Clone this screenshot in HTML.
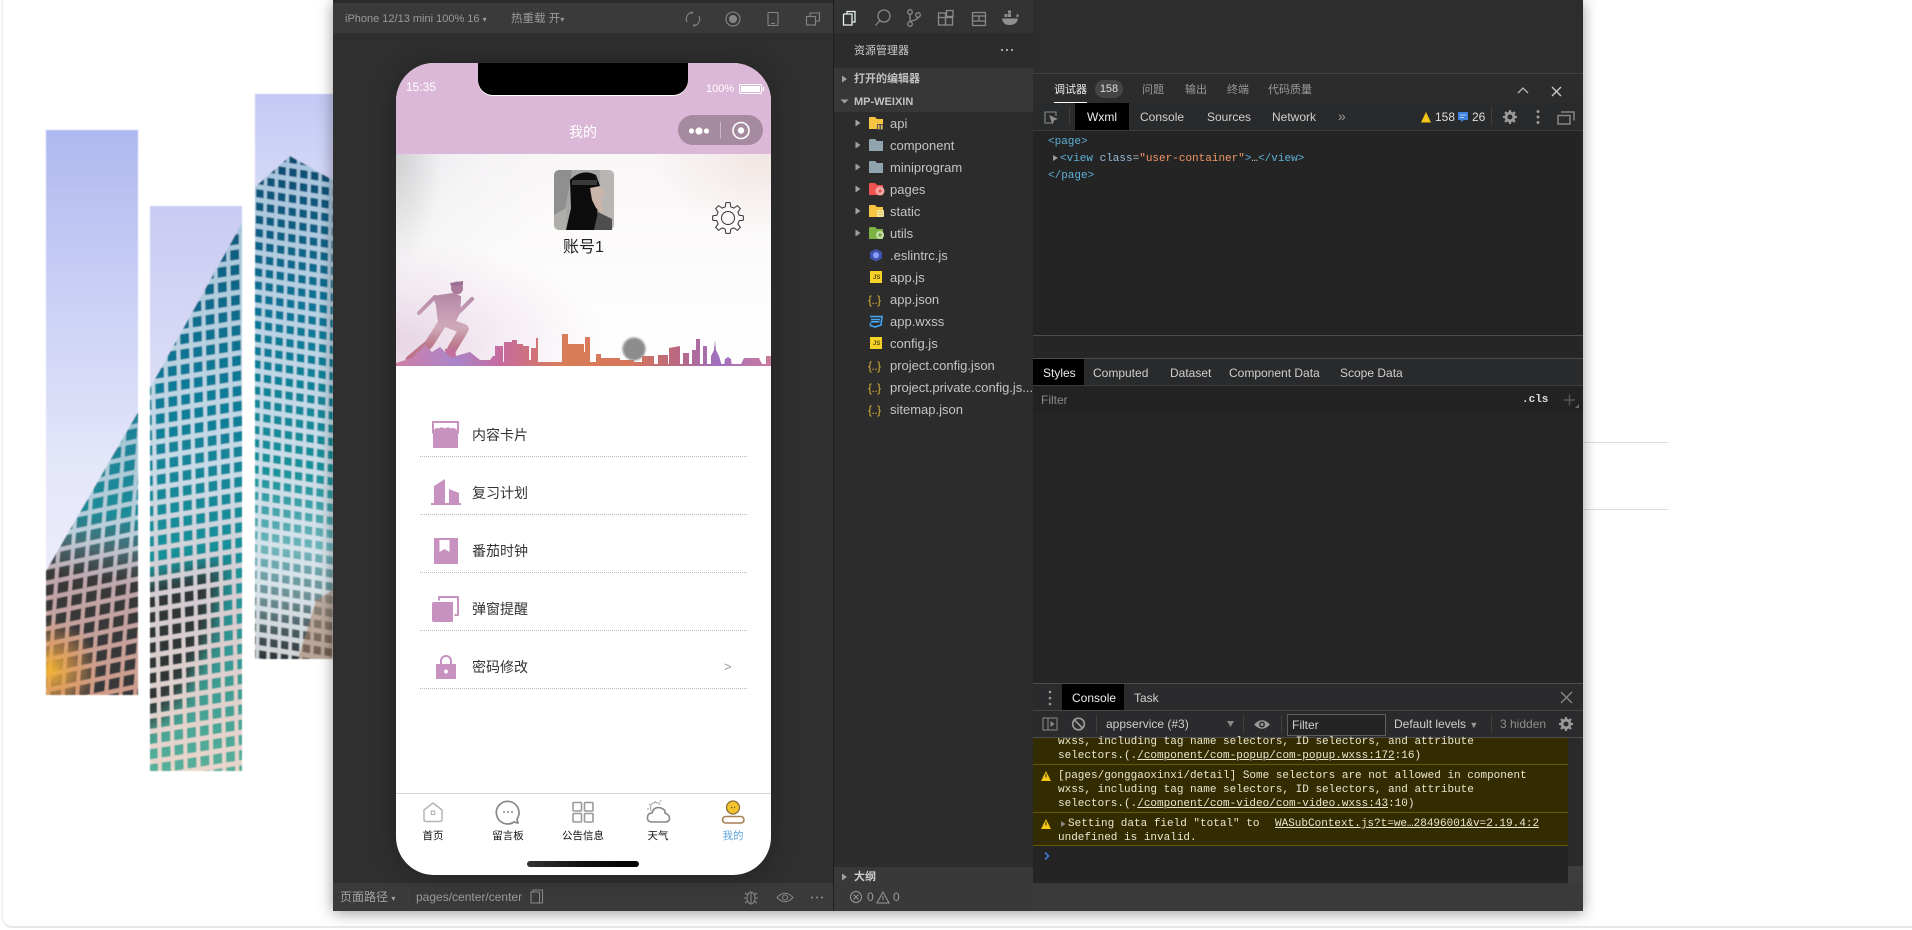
<!DOCTYPE html>
<html lang="zh"><head><meta charset="utf-8"><title>WeChat DevTools</title>
<style>
html,body{margin:0;padding:0;background:#fff;width:1912px;height:930px;overflow:hidden}
body{position:relative;font-family:"Liberation Sans","Noto Sans CJK SC",sans-serif;color:#bbb}
.a{position:absolute}
.t{position:absolute;white-space:nowrap;line-height:16px;font-size:12px}
.m{font-family:"Liberation Mono","Noto Sans CJK SC",monospace;font-size:11px;line-height:14px}
.d{position:absolute;background:#3f3f3f}
.f{font-size:13px;color:#c4c4c4}
.c{color:#e9e5cf}
.c u{color:#e9e5cf}
</style></head><body>
<div class="a" style="left:1px;top:-12px;width:1925px;height:940px;border:2px solid #f2f2f2;border-bottom-color:#e8e8e8;border-radius:11px;box-sizing:border-box"></div>
<div class="a" style="left:1583px;top:442px;width:85px;height:1px;background:#ddd"></div>
<div class="a" style="left:1583px;top:509px;width:85px;height:1px;background:#ddd"></div>

<!-- building -->
<svg class="a" style="left:0;top:0" width="340" height="800" viewBox="0 0 340 800">
<defs>
<linearGradient id="s1" x1="0" y1="0" x2="0" y2="1"><stop offset="0" stop-color="#aeb9ef"/><stop offset=".3" stop-color="#cbd0f5"/><stop offset=".6" stop-color="#e5e7fa"/><stop offset="1" stop-color="#f0f1fb"/></linearGradient>
<linearGradient id="s2" x1="0" y1="0" x2="0" y2="1"><stop offset="0" stop-color="#c9cbf2"/><stop offset=".5" stop-color="#e6e8fa"/><stop offset="1" stop-color="#eceefb"/></linearGradient>
<linearGradient id="s3" x1="0" y1="0" x2="0" y2="1"><stop offset="0" stop-color="#c3c9f3"/><stop offset=".2" stop-color="#d8dcf8"/><stop offset="1" stop-color="#dde0f9"/></linearGradient>
<linearGradient id="fr1" gradientUnits="userSpaceOnUse" x1="105" y1="400" x2="75" y2="695"><stop offset="0" stop-color="#9cc4d4"/><stop offset=".45" stop-color="#bcd0dc"/><stop offset=".62" stop-color="#bfa6ac"/><stop offset="1" stop-color="#d09c88"/></linearGradient>
<linearGradient id="fr2" gradientUnits="userSpaceOnUse" x1="0" y1="223" x2="0" y2="771"><stop offset="0" stop-color="#a6c6da"/><stop offset=".45" stop-color="#c8dce8"/><stop offset=".7" stop-color="#d6ccd0"/><stop offset="1" stop-color="#e8d6cc"/></linearGradient>
<linearGradient id="fr3" gradientUnits="userSpaceOnUse" x1="0" y1="156" x2="0" y2="659"><stop offset="0" stop-color="#a6c4dc"/><stop offset=".5" stop-color="#c4dae8"/><stop offset=".85" stop-color="#d8e4ea"/><stop offset="1" stop-color="#cfd2d4"/></linearGradient>
<linearGradient id="w1" gradientUnits="userSpaceOnUse" x1="105" y1="400" x2="75" y2="695"><stop offset="0" stop-color="#1f7e98"/><stop offset=".38" stop-color="#1c8c98"/><stop offset=".5" stop-color="#4b6a72"/><stop offset=".6" stop-color="#3a3838"/><stop offset="1" stop-color="#37383c"/></linearGradient>
<linearGradient id="w2" gradientUnits="userSpaceOnUse" x1="0" y1="223" x2="0" y2="771"><stop offset="0" stop-color="#125a7c"/><stop offset=".3" stop-color="#0f7b98"/><stop offset=".6" stop-color="#18919a"/><stop offset=".85" stop-color="#3e9c92"/><stop offset="1" stop-color="#57b09a"/></linearGradient>
<linearGradient id="w3" gradientUnits="userSpaceOnUse" x1="0" y1="156" x2="0" y2="659"><stop offset="0" stop-color="#114a70"/><stop offset=".3" stop-color="#0f7596"/><stop offset=".62" stop-color="#149199"/><stop offset=".78" stop-color="#6fb4bb"/><stop offset=".88" stop-color="#6d8f94"/><stop offset="1" stop-color="#2c3236"/></linearGradient>
<radialGradient id="yel" gradientUnits="userSpaceOnUse" cx="50" cy="670" r="50"><stop offset="0" stop-color="#f0b232"/><stop offset=".55" stop-color="#e49c50" stop-opacity=".55"/><stop offset="1" stop-color="#e09a55" stop-opacity="0"/></radialGradient>
<pattern id="g1" width="15" height="15" patternUnits="userSpaceOnUse" patternTransform="translate(40 400) rotate(-12) skewX(-16)"><rect x="2" y="2.500" width="11" height="10.500" fill="#fff"/></pattern>
<pattern id="g2" width="13" height="15" patternUnits="userSpaceOnUse" patternTransform="translate(150 200) rotate(-9) skewX(-8)"><rect x="2" y="2.500" width="9" height="10" fill="#fff"/></pattern>
<pattern id="g3" width="11" height="13" patternUnits="userSpaceOnUse" patternTransform="translate(255 160) rotate(9) skewX(8)"><rect x="1.800" y="2.500" width="7.500" height="8" fill="#fff"/></pattern>
<mask id="m1"><rect width="340" height="800" fill="url(#g1)"/></mask>
<mask id="m2"><rect width="340" height="800" fill="url(#g2)"/></mask>
<mask id="m3"><rect width="340" height="800" fill="url(#g3)"/></mask>
<clipPath id="b"><polygon points="46,571 138,412 150,388 242,223 255,205 255,187 290,156 340,184 340,800 0,800 0,650"/></clipPath>
<clipPath id="c1"><rect x="46" y="130" width="92" height="565"/></clipPath>
<clipPath id="c2"><rect x="150" y="206" width="92" height="565"/></clipPath>
<clipPath id="c3"><rect x="255" y="94" width="78" height="565"/></clipPath>
<filter id="sb"><feGaussianBlur stdDeviation=".6"/></filter>
<filter id="bb" x="-30%" y="-30%" width="160%" height="160%"><feGaussianBlur stdDeviation="9"/></filter>
</defs>
<g filter="url(#sb)">
<g clip-path="url(#c1)"><rect x="46" y="130" width="92" height="565" fill="url(#s1)"/>
<g clip-path="url(#b)"><rect width="340" height="800" fill="url(#fr1)"/><rect width="340" height="800" fill="url(#w1)" mask="url(#m1)"/><rect x="46" y="600" width="92" height="95" fill="url(#yel)"/></g></g>
<g clip-path="url(#c2)"><rect x="150" y="206" width="92" height="565" fill="url(#s2)"/>
<g clip-path="url(#b)"><rect width="340" height="800" fill="url(#fr2)"/><rect width="340" height="800" fill="url(#w2)" mask="url(#m2)"/>
<g mask="url(#m2)"><polygon points="130,585 222,565 210,640 180,700 130,740" fill="#333436" filter="url(#bb)"/></g></g></g>
<g clip-path="url(#c3)"><rect x="255" y="94" width="78" height="565" fill="url(#s3)"/>
<g clip-path="url(#b)"><rect width="340" height="800" fill="url(#fr3)"/><rect width="340" height="800" fill="url(#w3)" mask="url(#m3)"/><polygon points="298,659 333,659 333,590 316,600" fill="#a87f66" opacity=".55"/></g></g>
</g>
</svg>

<!-- dark app -->
<div class="a" style="left:333px;top:0;width:1250px;height:911px;background:#2f2f2f;box-shadow:0 2px 14px rgba(0,0,0,.4)"></div>
<div class="a" style="left:333px;top:0;width:501px;height:3px;background:#2a2a2a"></div>
<div class="a" style="left:333px;top:3px;width:501px;height:30px;background:#3a3a3a"></div>
<div class="a" style="left:333px;top:883px;width:501px;height:28px;background:#3a3a3a"></div>
<div class="a" style="left:833px;top:0;width:1px;height:911px;background:#1e1e1e"></div>
<!-- sidebar -->
<div class="a" style="left:834px;top:0;width:199px;height:883px;background:#2c2c2c"></div>
<div class="a" style="left:834px;top:0;width:199px;height:33px;background:#333"></div>
<div class="a" style="left:834px;top:68px;width:199px;height:44px;background:#373737"></div>
<div class="a" style="left:834px;top:867px;width:199px;height:44px;background:#393939"></div>
<!-- devtools -->
<div class="a" style="left:1033px;top:0;width:550px;height:73px;background:#2d2d2d"></div>
<div class="a" style="left:1033px;top:73px;width:550px;height:1px;background:#414141"></div>
<div class="a" style="left:1033px;top:74px;width:550px;height:29px;background:#2c2c2c"></div>
<div class="a" style="left:1033px;top:103px;width:550px;height:27px;background:#292a2c"></div>
<div class="a" style="left:1033px;top:130px;width:550px;height:205px;background:#242424;border-top:1px solid #3c3c3c;box-sizing:border-box"></div>
<div class="a" style="left:1033px;top:335px;width:550px;height:1px;background:#4d4d4d"></div>
<div class="a" style="left:1033px;top:336px;width:550px;height:22px;background:#262626"></div>
<div class="a" style="left:1033px;top:358px;width:550px;height:1px;background:#4d4d4d"></div>
<div class="a" style="left:1033px;top:359px;width:550px;height:26px;background:#292a2c"></div>
<div class="a" style="left:1033px;top:359px;width:51px;height:26px;background:#000"></div>
<div class="a" style="left:1033px;top:385px;width:550px;height:1px;background:#3c3c3c"></div>
<div class="a" style="left:1033px;top:386px;width:550px;height:27px;background:#222"></div>
<div class="a" style="left:1033px;top:413px;width:550px;height:270px;background:#252525"></div>
<div class="a" style="left:1033px;top:683px;width:550px;height:1px;background:#4d4d4d"></div>
<div class="a" style="left:1033px;top:684px;width:550px;height:26px;background:#2b2b2d"></div>
<div class="a" style="left:1062px;top:684px;width:62px;height:26px;background:#000"></div>
<div class="a" style="left:1033px;top:710px;width:550px;height:1px;background:#444"></div>
<div class="a" style="left:1033px;top:711px;width:550px;height:26px;background:#2b2b2d"></div>
<div class="a" style="left:1033px;top:737px;width:550px;height:1px;background:#4d4d4d"></div>
<div class="a" style="left:1033px;top:738px;width:550px;height:145px;background:#242424"></div>
<div class="a" style="left:1033px;top:738px;width:535px;height:107px;background:#332c00"></div>
<div class="a" style="left:1033px;top:764px;width:535px;height:1px;background:#665a00"></div>
<div class="a" style="left:1033px;top:812px;width:535px;height:1px;background:#665a00"></div>
<div class="a" style="left:1033px;top:845px;width:535px;height:1px;background:#665a00"></div>
<div class="a" style="left:1568px;top:738px;width:15px;height:145px;background:#2a2a2a"></div>
<div class="a" style="left:1568px;top:866px;width:15px;height:17px;background:#3d3d3d"></div>
<div class="a" style="left:1033px;top:883px;width:550px;height:28px;background:#3a3a3a"></div>
<div class="a" style="left:1033px;top:866px;width:535px;height:17px;background:#242424"></div>

<!-- phone -->
<div class="a" style="left:396px;top:63px;width:375px;height:812px;border-radius:38px;overflow:hidden;background:#fff;box-shadow:0 0 26px rgba(0,0,0,.28)">
  <div class="a" style="left:0;top:0;width:375px;height:91px;background:#dcb8d8"></div>
  <div class="a" style="left:82px;top:0;width:210px;height:32px;background:#000;border-radius:0 0 15px 15px;box-shadow:0 1px 0 #fff"></div>
  <div class="a" style="left:0;top:91px;width:375px;height:212px;background:
    radial-gradient(ellipse 210px 105px at 0 190px,rgba(222,196,218,.7) 0,rgba(230,210,226,.4) 50%,rgba(255,255,255,0) 100%),
    radial-gradient(ellipse 45px 110px at 0 0,rgba(175,175,175,.45),rgba(255,255,255,0)),
    radial-gradient(ellipse 120px 80px at 375px 0,rgba(232,212,205,.5),rgba(255,255,255,0)),
    linear-gradient(125deg,rgba(225,225,230,.6) 0,rgba(240,240,242,.4) 18%,rgba(255,255,255,0) 36%),
    linear-gradient(180deg,#f9f6f7,#fdfcfc 60%,#fff)"></div>
  <div class="a" style="left:158px;top:107px;width:60px;height:60px;border-radius:6px;background:#a9a9a9;overflow:hidden"></div>
  <div class="a" style="left:0;top:730px;width:375px;height:1px;background:#d6d6d6"></div>
  <div class="a" style="left:131px;top:798px;width:112px;height:6px;border-radius:3px;background:linear-gradient(90deg,#333,#111 50%,#000)"></div>
</div>
<div class="t" style="left:406px;top:79px;color:#fff;font-size:12px">15:35</div>
<div class="t" style="left:706px;top:81px;color:#fff;font-size:11px">100%</div>
<div class="t" style="left:569px;top:124px;color:#fff;font-size:14px">我的</div>
<div class="t" style="left:563px;top:240px;width:40px;text-align:center;color:#222;font-size:16px">账号1</div>
<div class="a" style="left:678px;top:115px;width:85px;height:30px;border-radius:15px;background:#a68a9f;"></div>

<div class="t" style="left:472px;top:427px;color:#333;font-size:14px">内容卡片</div>
<div class="t" style="left:472px;top:485px;color:#333;font-size:14px">复习计划</div>
<div class="t" style="left:472px;top:543px;color:#333;font-size:14px">番茄时钟</div>
<div class="t" style="left:472px;top:601px;color:#333;font-size:14px">弹窗提醒</div>
<div class="t" style="left:472px;top:659px;color:#333;font-size:14px">密码修改</div>
<div class="t" style="left:724px;top:659px;color:#999;font-size:13px">&gt;</div>
<div class="a" style="left:420px;top:456px;width:327px;border-top:1px dotted #bbb"></div>
<div class="a" style="left:420px;top:514px;width:327px;border-top:1px dotted #bbb"></div>
<div class="a" style="left:420px;top:572px;width:327px;border-top:1px dotted #bbb"></div>
<div class="a" style="left:420px;top:630px;width:327px;border-top:1px dotted #bbb"></div>
<div class="a" style="left:420px;top:688px;width:327px;border-top:1px dotted #bbb"></div>

<div class="t" style="left:413px;top:828px;width:40px;text-align:center;color:#111;font-size:10.5px">首页</div>
<div class="t" style="left:478px;top:828px;width:60px;text-align:center;color:#111;font-size:10.5px">留言板</div>
<div class="t" style="left:553px;top:828px;width:60px;text-align:center;color:#111;font-size:10.5px">公告信息</div>
<div class="t" style="left:638px;top:828px;width:40px;text-align:center;color:#111;font-size:10.5px">天气</div>
<div class="t" style="left:713px;top:828px;width:40px;text-align:center;color:#5ea3d8;font-size:10.5px">我的</div>

<!-- preview toolbar text -->
<div class="t" style="left:345px;top:11px;color:#9a9a9a;font-size:11px">iPhone 12/13 mini 100% 16 <span style="font-size:8px">▾</span></div>
<div class="t" style="left:511px;top:11px;color:#9a9a9a;font-size:11.5px">热重载 开<span style="font-size:8px">▾</span></div>
<!-- bottom bar -->
<div class="t" style="left:340px;top:889px;color:#a4a4a4;font-size:12px">页面路径 <span style="font-size:8px">▾</span></div>
<div class="t" style="left:416px;top:889px;color:#9a9a9a;font-size:12px">pages/center/center</div>

<!-- sidebar text -->
<div class="t" style="left:854px;top:43px;color:#ccc;font-size:11px">资源管理器</div>
<div class="t" style="left:854px;top:71px;color:#c2c2c2;font-size:11px;font-weight:700">打开的编辑器</div>
<div class="t" style="left:854px;top:94px;color:#c2c2c2;font-size:11px;font-weight:700">MP-WEIXIN</div>
<div class="t f" style="left:890px;top:116px">api</div>
<div class="t f" style="left:890px;top:138px">component</div>
<div class="t f" style="left:890px;top:160px">miniprogram</div>
<div class="t f" style="left:890px;top:182px">pages</div>
<div class="t f" style="left:890px;top:204px">static</div>
<div class="t f" style="left:890px;top:226px">utils</div>
<div class="t f" style="left:890px;top:248px">.eslintrc.js</div>
<div class="t f" style="left:890px;top:270px">app.js</div>
<div class="t f" style="left:890px;top:292px">app.json</div>
<div class="t f" style="left:890px;top:314px">app.wxss</div>
<div class="t f" style="left:890px;top:336px">config.js</div>
<div class="t f" style="left:890px;top:358px">project.config.json</div>
<div class="t f" style="left:890px;top:380px;letter-spacing:-.03px">project.private.config.js...</div>
<div class="t f" style="left:890px;top:402px">sitemap.json</div>
<div class="t" style="left:854px;top:869px;color:#ccc;font-size:11px;font-weight:700">大纲</div>
<div class="t" style="left:867px;top:889px;color:#999;font-size:12px">0</div>
<div class="t" style="left:893px;top:889px;color:#999;font-size:12px">0</div>
<div class="t" style="left:1054px;top:82px;color:#eee;font-size:11px">调试器</div>
<div class="a" style="left:1054px;top:102px;width:33px;height:1px;background:#fff"></div>
<div class="a" style="left:1095px;top:80px;width:28px;height:18px;border-radius:9px;background:#454545"></div>
<div class="t" style="left:1095px;top:81px;width:28px;text-align:center;color:#ddd;font-size:11px">158</div>
<div class="t" style="left:1142px;top:82px;color:#9a9a9a;font-size:11px">问题</div>
<div class="t" style="left:1185px;top:82px;color:#9a9a9a;font-size:11px">输出</div>
<div class="t" style="left:1227px;top:82px;color:#9a9a9a;font-size:11px">终端</div>
<div class="t" style="left:1268px;top:82px;color:#9a9a9a;font-size:11px">代码质量</div>

<div class="a" style="left:1075px;top:103px;width:54px;height:27px;background:#000"></div>
<div class="t" style="left:1087px;top:109px;color:#eee">Wxml</div>
<div class="t" style="left:1140px;top:109px;color:#cfcfcf">Console</div>
<div class="t" style="left:1207px;top:109px;color:#cfcfcf">Sources</div>
<div class="t" style="left:1272px;top:109px;color:#cfcfcf">Network</div>
<div class="t" style="left:1338px;top:108px;color:#999;font-size:14px">»</div>
<div class="t" style="left:1435px;top:109px;color:#ddd">158</div>
<div class="t" style="left:1472px;top:109px;color:#ddd">26</div>

<div class="t m" style="left:1048px;top:135px;color:#5db0d7">&lt;page&gt;</div>
<div class="t m" style="left:1060px;top:152px;color:#5db0d7">&lt;view <span style="color:#9bbbdc">class</span><span style="color:#bbb">=</span><span style="color:#f29766">"user-container"</span>&gt;<span style="color:#ccc">…</span>&lt;/view&gt;</div>
<div class="t m" style="left:1048px;top:169px;color:#5db0d7">&lt;/page&gt;</div>

<div class="t" style="left:1043px;top:365px;color:#eee">Styles</div>
<div class="t" style="left:1093px;top:365px;color:#cfcfcf">Computed</div>
<div class="t" style="left:1170px;top:365px;color:#cfcfcf">Dataset</div>
<div class="t" style="left:1229px;top:365px;color:#cfcfcf">Component Data</div>
<div class="t" style="left:1340px;top:365px;color:#cfcfcf">Scope Data</div>
<div class="t" style="left:1041px;top:392px;color:#8a8a8a">Filter</div>
<div class="t m" style="left:1522px;top:392px;color:#ddd;font-weight:700;line-height:16px">.cls</div>

<div class="t" style="left:1072px;top:690px;color:#eee">Console</div>
<div class="t" style="left:1134px;top:690px;color:#cfcfcf">Task</div>
<div class="t" style="left:1106px;top:716px;color:#cfcfcf">appservice (#3)</div>
<div class="a" style="left:1287px;top:714px;width:99px;height:22px;border:1px solid #5e5e5e;box-sizing:border-box;background:#242424"></div>
<div class="t" style="left:1292px;top:717px;color:#cfcfcf">Filter</div>
<div class="t" style="left:1394px;top:716px;color:#cfcfcf">Default levels <span style="font-size:9px;color:#999">▼</span></div>
<div class="t" style="left:1500px;top:716px;color:#8d8d8d">3 hidden</div>

<div class="t m c" style="left:1058px;top:735px">wxss, including tag name selectors, ID selectors, and attribute</div>
<div class="t m c" style="left:1058px;top:749px">selectors.(.<u>/component/com-popup/com-popup.wxss:172</u>:16)</div>
<div class="t m c" style="left:1058px;top:769px">[pages/gonggaoxinxi/detail] Some selectors are not allowed in component</div>
<div class="t m c" style="left:1058px;top:783px">wxss, including tag name selectors, ID selectors, and attribute</div>
<div class="t m c" style="left:1058px;top:797px">selectors.(.<u>/component/com-video/com-video.wxss:43</u>:10)</div>
<div class="t m c" style="left:1068px;top:817px">Setting data field "total" to</div>
<div class="t m c" style="left:1275px;top:817px"><u>WASubContext.js?t=we…28496001&amp;v=2.19.4:2</u></div>
<div class="t m c" style="left:1058px;top:831px">undefined is invalid.</div>

<!-- dividers -->
<div class="d" style="left:408px;top:889px;width:1px;height:16px"></div>
<div class="d" style="left:1069px;top:107px;width:1px;height:18px"></div>
<div class="d" style="left:1491px;top:107px;width:1px;height:18px"></div>
<div class="d" style="left:1096px;top:715px;width:1px;height:18px"></div>
<div class="d" style="left:1243px;top:715px;width:1px;height:18px"></div>
<div class="d" style="left:1281px;top:715px;width:1px;height:18px"></div>
<div class="d" style="left:1491px;top:715px;width:1px;height:18px"></div>

<!-- icon overlay -->
<svg class="a" style="left:0;top:0" width="1912" height="930" viewBox="0 0 1912 930" fill="none">
<defs>
<polygon id="gear" points="11.16,-2.78 15.35,-2.16 15.35,2.16 11.16,2.78 9.86,5.92 12.38,9.33 9.33,12.38 5.92,9.86 2.78,11.16 2.16,15.35 -2.16,15.35 -2.78,11.16 -5.92,9.86 -9.33,12.38 -12.38,9.33 -9.86,5.92 -11.16,2.78 -15.35,2.16 -15.35,-2.16 -11.16,-2.78 -9.86,-5.92 -12.38,-9.33 -9.33,-12.38 -5.92,-9.86 -2.78,-11.16 -2.16,-15.35 2.16,-15.35 2.78,-11.16 5.92,-9.86 9.33,-12.38 12.38,-9.33 9.86,-5.92"/>
<linearGradient id="sky" gradientUnits="userSpaceOnUse" x1="396" y1="0" x2="771" y2="0">
<stop offset="0" stop-color="#cf7fa6"/><stop offset=".16" stop-color="#a985c9"/><stop offset=".28" stop-color="#c76a9e"/><stop offset=".45" stop-color="#d87d58"/><stop offset=".62" stop-color="#d8755a"/><stop offset=".75" stop-color="#b96880"/><stop offset=".86" stop-color="#a070c0"/><stop offset="1" stop-color="#cb7a9c"/></linearGradient>
<linearGradient id="run" gradientUnits="userSpaceOnUse" x1="0" y1="282" x2="0" y2="365"><stop offset="0" stop-color="#a97a9a"/><stop offset=".35" stop-color="#c39ab2"/><stop offset=".55" stop-color="#cfa9b8"/><stop offset=".75" stop-color="#bd7c8e"/><stop offset="1" stop-color="#c06a80"/></linearGradient>
<filter id="bl"><feGaussianBlur stdDeviation="1"/></filter>
</defs>
<!-- avatar -->
<g>
<rect x="554" y="170" width="60" height="60" rx="6" fill="#a6a6a6"/>
<path d="M554 176 Q554 170 560 170 H572 L566 205 L560 230 H560 Q554 230 554 224Z" fill="#8f8f8f"/>
<path d="M600 170 H608 Q614 170 614 176 V224 Q614 230 608 230 H600Z" fill="#b8b5b2"/>
<path d="M570 180 Q582 168 596 175 L600 186 L597 198 L598 230 H566 L571 208 Z" fill="#0d0d0d"/>
<rect x="572" y="180" width="25" height="5" fill="#3a3a3a"/>
<path d="M590 188 L600 186 L605 192 L601 200 L604 215 L596 208 L592 200Z" fill="#cbb5aa"/>
<path d="M598 212 L612 219 L612 230 H594Z" fill="#4e4e4e"/>
<path d="M554 215 L566 208 L566 230 H560 Q554 230 554 224Z" fill="#b0aeab"/>
</g>
<!-- gear big -->
<g transform="translate(728,218)"><use href="#gear" stroke="#333" stroke-width="1" stroke-linejoin="round" fill="#fdf9f8"/><circle r="6.5" stroke="#333" stroke-width="1"/></g>
<!-- status -->
<rect x="739.5" y="84.5" width="22" height="9" rx="1.5" stroke="#fff" stroke-width="1"/><rect x="741" y="86" width="19" height="6" fill="#fff"/><rect x="762.5" y="87" width="1.5" height="4" fill="#fff"/>
<!-- capsule -->
<circle cx="691.5" cy="131" r="2.6" fill="#fff"/><circle cx="699" cy="131" r="3.6" fill="#fff"/><circle cx="706.500" cy="131" r="2.6" fill="#fff"/>
<rect x="720" y="122" width="1" height="17" fill="#c9b8c5"/>
<circle cx="741" cy="130.5" r="8" stroke="#fff" stroke-width="1.6"/><circle cx="741" cy="130.5" r="3.2" fill="#fff"/>
<!-- runner -->
<ellipse cx="457" cy="288" rx="6" ry="6.500" fill="#a97a9a"/>
<path d="M450 283 L463 281 L463 285 L451 286Z" fill="#9c7092"/>
<path d="M452 293 L461 296 L461 300 L460 313 L454 325 L438 323 L436 306 L433 296Z" fill="url(#run)"/>
<g stroke="url(#run)" stroke-linecap="round" stroke-linejoin="round" fill="none">
<path d="M435 297 L426 306 L419 313" stroke-width="4"/>
<path d="M458 298 L459 312 L472 299" stroke-width="4"/>
<path d="M445 322 L464 329 L452 349" stroke-width="9.500"/>
<path d="M441 325 L429 344 L410 360" stroke-width="9"/>
</g>
<path d="M445 349 L455 347 L456 356 L470 352 L476 360 L452 366 L446 360Z" fill="#c0709a"/>
<!-- skyline -->
<path fill="url(#sky)" d="M396 366 V363 L412 358 L425 345 L432 352 L440 347 L448 355 L452 358 L470 352 L480 360 H490 L493 356 H497 V366Z
M495 366 V346 H503 V362 H504 V342 H512 V340 H517 V344 H523 V346 H529 V360 H531 V348 H536 V338 H538 V362 H562 V334 H568 V344 H574 V344 H584 V352 H585 V337 H590 V362 H596 V354 H601 V358 H620 V360 H634 V362 H642 V356 H654 V366 Z
M658 366 V355 H668 V366Z M669 366 V348 L680 346 V366Z M683 366 V353 H689 V366Z M692 366 V350 H697 V366Z M696 366 V339 H700 V366Z M703 366 V346 H707 V366Z
M711 366 V356 L714 350 L715 340 L716 350 L719 356 L722 366Z M724 366 L725 359 L728 357 L731 359 L732 366Z M736 366 V364 H741 L744 358 H759 L762 364 H766 V356 H771 V366Z"/>
<path fill="url(#sky)" d="M396 364 H771 V366 H396Z"/>
<circle cx="634" cy="349" r="11.5" fill="#8c8c8c" filter="url(#bl)"/>

<!-- list icons -->
<g fill="#c792c0">
<path d="M432 421 H459 V433 Q457 436 454 433 Q451 436 448 433 Q445 436 442 433 Q439 436 436 433 Q434 436 432 433Z M434 423 V430 Q436 427 439 428.500 Q441 426 445 428.500 Q448 426 451 428.500 Q454 427 457 430 V423Z" fill-rule="evenodd"/>
<path d="M433 430.500 Q436 434.500 439 431 Q442 434.500 445.500 431 Q449 434.500 452 431 Q455 434.500 458 430.500 V448 H433Z"/>
<path d="M431 505 V503 H434 V486 L445 479 V503 H449 V489 L459 493 V503 H461 V505Z"/>
<path d="M434 538 H458 V564 H434Z M439.500 540 V552 L444.500 549 L449.500 552 V540Z" fill-rule="evenodd"/>
<path d="M432 604 Q432 602 434 602 H453 V621 Q453 622 451 622 H434 Q432 622 432 620Z"/>
<path d="M438 597 Q438 596 439 596 H458 Q459 596 459 597 V615 Q459 616 458 616 H454.500 V614 H457 V598 H440 V600.500 H438Z"/>
<path d="M440 664 V661 A6 6 0 0 1 452 661 V664 H450 V661 A4 4 0 0 0 442 661 V664Z"/>
<path d="M436 664 H456 V679 H436Z M446 669.500 a2 2 0 1 0 .01 0Z" fill-rule="evenodd"/>
</g>

<!-- tab icons -->
<path d="M424 810 L433 803 L442 810 V819 Q442 821.500 440 821.500 H426 Q424 821.500 424 819Z" stroke="#b5b5b5" stroke-width="1.5" stroke-linejoin="round"/>
<rect x="431.200" y="811" width="3.600" height="3.600" stroke="#aaa" stroke-width="1"/>
<path d="M514 822 A11.300 11.300 0 1 1 517 819 L518 823Z" stroke="#888" stroke-width="1.700" stroke-linejoin="round"/>
<circle cx="504" cy="812" r="1" fill="#888"/><circle cx="508" cy="812" r="1" fill="#888"/><circle cx="512" cy="812" r="1" fill="#888"/>
<g stroke="#999" stroke-width="1.600"><rect x="573" y="802.500" width="8.500" height="8.500" rx="1"/><rect x="584.500" y="802.500" width="8.500" height="8.500" rx="1"/><rect x="573" y="813.500" width="8.500" height="8.500" rx="1"/><rect x="584.500" y="813.500" width="8.500" height="8.500" rx="1"/></g>
<path d="M652 822 Q647 822 647.500 817 Q648 813 652 813 Q654 806 661 808 Q666 810 665 813 Q670 815 669.500 819 Q669 822 665 822Z" stroke="#888" stroke-width="1.600" fill="#fff"/>
<path d="M651.500 811 A5 5 0 0 1 660 804.500 M655 801 V803 M649 804 L650.500 805 M661 800 L660 802 M647 809 H649" stroke="#b5b5b5" stroke-width="1.300"/>
<circle cx="733" cy="807.500" r="6.500" fill="#f3c32d" stroke="#8a6d3b" stroke-width="1.300"/>
<circle cx="731.500" cy="807.500" r=".7" fill="#6a5a30"/><circle cx="734.500" cy="807.500" r=".7" fill="#6a5a30"/>
<rect x="722.500" y="816.500" width="21.500" height="6.500" rx="3.250" stroke="#a87f55" stroke-width="1.600"/>

<!-- preview toolbar icons -->
<g stroke="#858585" stroke-width="1.100">
<path d="M687 22 A7 7 0 0 1 693 12 M699 16 A7 7 0 0 1 693 26 M693 12 L691 14 M693 26 L695 24"/>
<circle cx="733" cy="19" r="7"/><circle cx="733" cy="19" r="3.500" fill="#858585"/>
<rect x="768" y="12.500" width="10" height="13" rx="1"/><path d="M771 23.500 H775"/>
<rect x="806.500" y="16.500" width="9" height="8.500" /><path d="M810 16.500 V13 H819.500 V21 H815.500"/>
<!-- bottom -->
<rect x="531" y="892" width="8.500" height="11"/><path d="M533 892 V890 H542.500 V903 H539.500"/>
<ellipse cx="751" cy="898" rx="4" ry="6"/><path d="M745 893 L748 895 M757 893 L754 895 M744 898 H747 M758 898 H755 M745 903 L748 901 M757 903 L754 901 M751 892 V904"/>
<path d="M777 897.500 Q785 889 793 897.500 Q785 906 777 897.500Z"/><circle cx="785" cy="897.500" r="2.500"/>
</g>
<g fill="#8f8f8f"><circle cx="812" cy="897.500" r="1"/><circle cx="817" cy="897.500" r="1"/><circle cx="822" cy="897.500" r="1"/></g>

<!-- activity bar -->
<g stroke-width="1.300" stroke="#8a8a8a">
<path d="M843.500 14 H847 V11.500 H855 V22 H852 M843.500 14 V25 H852 V14 H843.500" stroke="#e4f1ee"/>
<circle cx="884" cy="16" r="6"/><path d="M880 20.500 L875.500 25.500"/>
<circle cx="910" cy="12" r="2.300"/><circle cx="910" cy="24" r="2.300"/><circle cx="918" cy="15" r="2.300"/><path d="M910 14.500 V21.500 M918 17.500 Q917 20 911 21"/>
<rect x="938.500" y="17.500" width="7" height="7.500"/><rect x="945.500" y="17.500" width="7" height="7.500"/><rect x="946.500" y="10.500" width="6.500" height="6"/><path d="M938.500 17.500 V13 H945.500 V17.500"/>
<rect x="972.500" y="12.500" width="13" height="13" rx=".5"/><path d="M972.500 16 H985.500 M979 16 V21 H985.500 M972.500 21 H979"/>
</g>
<path d="M1002 18.500 H1018 Q1017 25 1009 25 Q1003 25 1002 18.500Z M1004.500 14 h3 v3 h-3Z M1008 14 h3 v3 h-3Z M1008 10.500 h3 v3 h-3Z M1018 17 Q1020 15 1017 14 Q1016 16 1016.500 17Z" fill="#8f8f8f"/>
<g fill="#ccc"><circle cx="1002" cy="50" r="1"/><circle cx="1007" cy="50" r="1"/><circle cx="1012" cy="50" r="1"/></g>

<!-- tree arrows -->
<g fill="#a0a0a0">
<path d="M842 75.500 L847 79 L842 82.500Z"/>
<path d="M840.500 99.500 H848.500 L844.500 103.500Z"/>
<path d="M855.500 119.500 L860.500 123 L855.500 126.500Z"/><path d="M855.500 141.500 L860.500 145 L855.500 148.500Z"/><path d="M855.500 163.500 L860.500 167 L855.500 170.500Z"/><path d="M855.500 185.500 L860.500 189 L855.500 192.500Z"/><path d="M855.500 207.500 L860.500 211 L855.500 214.500Z"/><path d="M855.500 229.500 L860.500 233 L855.500 236.500Z"/>
<path d="M842 873.500 L847 877 L842 880.500Z"/>
</g>
<!-- folders -->
<path d="M869 118 Q869 117 870 117 H875 L877 119 H883 V129 H869Z" fill="#f6c343"/><path d="M877 124 h6 v6 h-6Z" fill="#555"/><path d="M878 125 h1.500 v4 h-1.500Z M881 125 h1.500 v4 h-1.500Z" fill="#f6c343"/>
<path d="M869 140 Q869 139 870 139 H875 L877 141 H883 V151 H869Z" fill="#90a4ae"/>
<path d="M869 162 Q869 161 870 161 H875 L877 163 H883 V173 H869Z" fill="#90a4ae"/>
<path d="M869 184 Q869 183 870 183 H875 L877 185 H883 V195 H869Z" fill="#ef5350"/><circle cx="880" cy="191" r="4.500" fill="#f4a6a0"/><circle cx="880" cy="191" r="1.500" fill="#d9534f"/>
<path d="M869 206 Q869 205 870 205 H875 L877 207 H883 V217 H869Z" fill="#f6c343"/><rect x="877" y="210" width="7" height="7" rx="1" fill="#f9e79f"/><path d="M878 212 h5 M878 214.500 h5" stroke="#d9b33c" stroke-width=".8"/>
<path d="M869 228 Q869 227 870 227 H875 L877 229 H883 V239 H869Z" fill="#7cb342"/><circle cx="880" cy="235" r="4" fill="#c5e1a5"/><path d="M878 235 h4 M880 233 v4" stroke="#558b2f" stroke-width="1"/>
<!-- eslint -->
<path d="M876 249 L882 252 V258.500 L876 261.500 L870 258.500 V252Z" fill="#3f51a8"/><circle cx="876" cy="255.250" r="3" fill="#8c9eff"/>
<!-- js -->
<rect x="870" y="271" width="12" height="12" fill="#f5d327"/><rect x="870" y="337" width="12" height="12" fill="#f5d327"/>
<!-- css -->
<path d="M870 316.500 H882 L881 325 L875 327 L870.500 325.500 L870.300 323 M871 319.500 H880 M870.800 321.800 H879.500" stroke="#42a5f5" stroke-width="1.600"/>

<!-- devtools icons -->
<path d="M1518 93 L1523 88 L1528 93" stroke="#bbb" stroke-width="1.300"/>
<path d="M1552 87 L1561 96 M1561 87 L1552 96" stroke="#ccc" stroke-width="1.300"/>
<path d="M1052 123 H1045 V112 H1056 V116" stroke="#8c8c8c" stroke-width="1.100"/><path d="M1049 115 L1058 119 L1054 120.500 L1052.500 124.500Z" fill="#8c8c8c"/>
<path d="M1421 122.500 L1426 112 L1431 122.500Z" fill="#f5c518"/>
<path d="M1458 112 H1468 V120 H1464 L1461 122 V120 H1458Z" fill="#3f83e0"/><path d="M1460 115 h6 M1460 117.500 h4" stroke="#cfe0fa" stroke-width=".8"/>
<g transform="translate(1510,117) scale(.46)"><use href="#gear" fill="#9a9a9a"/><circle r="5.500" fill="#292a2c"/></g>
<g fill="#9a9a9a"><circle cx="1538" cy="111.500" r="1.500"/><circle cx="1538" cy="117" r="1.500"/><circle cx="1538" cy="122.500" r="1.500"/></g>
<path d="M1558 115.500 H1570 V124 H1558Z M1561 112 H1574 V120.500" stroke="#858585" stroke-width="1.600"/>
<path d="M1564 400 h11 M1569.500 394.500 v11" stroke="#555" stroke-width="1.500"/>
<path d="M1579 408 L1579 404 L1575 408Z" fill="#666"/>
<g fill="#9a9a9a"><circle cx="1050" cy="692" r="1.300"/><circle cx="1050" cy="698" r="1.300"/><circle cx="1050" cy="704" r="1.300"/></g>
<path d="M1561 692 L1572 703 M1572 692 L1561 703" stroke="#888" stroke-width="1.300"/>
<rect x="1043" y="718" width="14" height="12" stroke="#8c8c8c" stroke-width="1"/><path d="M1048 718 V730" stroke="#8c8c8c"/><path d="M1050.500 721 L1054.500 724 L1050.500 727Z" fill="#8c8c8c"/>
<circle cx="1078.500" cy="724" r="5.800" stroke="#999" stroke-width="1.700"/><path d="M1074.500 720 L1082.500 728" stroke="#999" stroke-width="1.700"/>
<path d="M1227 721 H1234 L1230.500 727Z" fill="#888"/>
<path d="M1254 724.500 Q1262 716 1270 724.500 Q1262 733 1254 724.500Z" fill="#999"/><circle cx="1262" cy="724.500" r="3" fill="#2b2b2d"/><circle cx="1262" cy="724.500" r="1.500" fill="#999"/>
<g transform="translate(1566,724) scale(.46)"><use href="#gear" fill="#9a9a9a"/><circle r="5.500" fill="#2b2b2d"/></g>
<path d="M1041 781 L1046 771 L1051 781Z" fill="#f5c518"/><path d="M1041 829 L1046 819 L1051 829Z" fill="#f5c518"/>
<path d="M1046 773.500 V777.500 M1046 821.500 V825.500" stroke="#332c00" stroke-width="1"/>
<path d="M1061 821 L1065.500 824 L1061 827Z" fill="#888"/>
<path d="M1045 852.500 L1048.500 856 L1045 859.500" stroke="#3f83e0" stroke-width="1.500"/>
<path d="M1052 155 L1057 158 L1052 161Z" transform="translate(1 0)" fill="#999"/>
<circle cx="856" cy="897" r="5.500" stroke="#999" stroke-width="1"/><path d="M853.500 894.500 L858.500 899.500 M858.500 894.500 L853.500 899.500" stroke="#999" stroke-width="1"/>
<path d="M877 903 L883 892 L889 903Z" stroke="#999" stroke-width="1"/><path d="M883 896 V900" stroke="#999"/>
</svg>
<div class="t m" style="left:873px;top:273px;font-size:6px;line-height:10px;color:#5a4a00;font-weight:700;font-family:'Liberation Sans',sans-serif">JS</div>
<div class="t m" style="left:873px;top:339px;font-size:6px;line-height:10px;color:#5a4a00;font-weight:700;font-family:'Liberation Sans',sans-serif">JS</div>
<div class="t" style="left:868px;top:292px;color:#d6b13c;font-size:12px;letter-spacing:-.5px">{..}</div>
<div class="t" style="left:868px;top:358px;color:#d6b13c;font-size:12px;letter-spacing:-.5px">{..}</div>
<div class="t" style="left:868px;top:380px;color:#d6b13c;font-size:12px;letter-spacing:-.5px">{..}</div>
<div class="t" style="left:868px;top:402px;color:#d6b13c;font-size:12px;letter-spacing:-.5px">{..}</div>
</body></html>
